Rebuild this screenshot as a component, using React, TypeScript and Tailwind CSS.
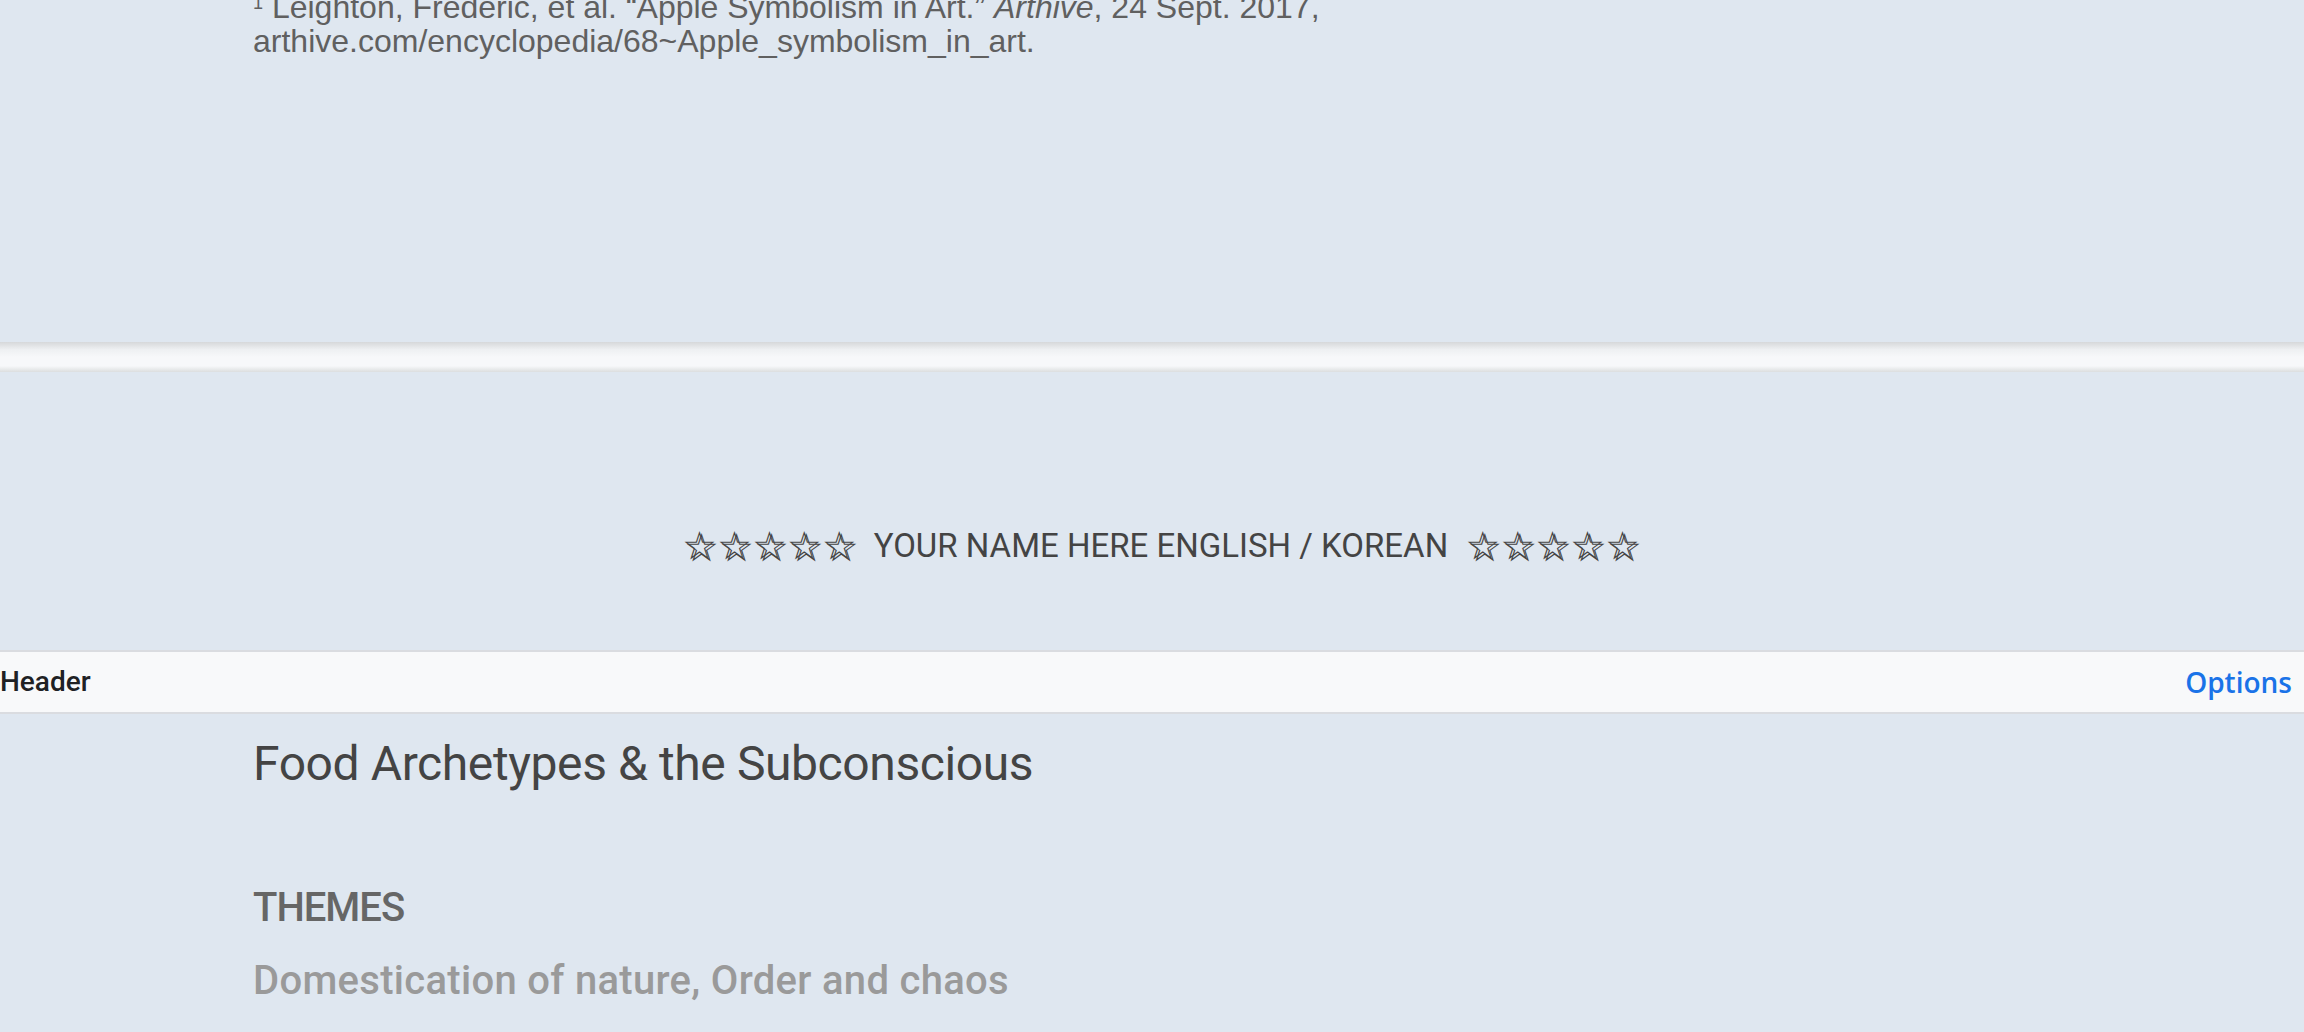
import type { ReactNode } from "react";

/** Outline stars flanking the name line; the offset shadow gives the thick lower-right edge. */
function Stars() {
  return (
    <span
      aria-hidden="true"
      className="font-['DejaVu_Sans',sans-serif] text-[39px] leading-[40px] text-[#444] [text-shadow:2px_2px_0_#444]"
    >
      ☆☆☆☆☆
    </span>
  );
}

function Section({ children, className }: { children: ReactNode; className?: string }) {
  return <section className={`px-[253px] ${className ?? ""}`}>{children}</section>;
}

export default function App() {
  return (
    <div className="min-h-[1032px] overflow-hidden bg-[#dfe7f0]">
      {/* Footnote from the previous page, scrolled partly out of view. */}
      <Section className="-mt-[10px]">
        <p className="font-['Liberation_Sans',Arial,sans-serif] text-[32px] leading-[34px] text-[#606060]">
          <sup className="text-[18px]">1</sup> Leighton, Frederic, et al. “Apple Symbolism in Art.”{" "}
          <i>Arthive</i>, 24 Sept. 2017,
          <br />
          arthive.com/encyclopedia/68~Apple_symbolism_in_art.
        </p>
      </Section>

      {/* Page break between slides. */}
      <div className="mt-[284px] h-[30px] bg-[linear-gradient(to_bottom,#d6d8da,#eef0f2_25%,#f7f8fa_50%,#f7f8fa_80%,#dcdedf)]" />

      <div className="flex items-center justify-center gap-[17px] pt-[154px] pb-[84px] pl-[18px] font-['Roboto',sans-serif] text-[33px] leading-[40px] text-[#444]">
        <Stars />
        <span>YOUR NAME HERE ENGLISH / KOREAN</span>
        <Stars />
      </div>

      <header className="flex h-[64px] items-center justify-between border-y-2 border-[#dadce0] bg-[#f8f9fa] pr-[12px]">
        <span className="font-['Roboto',sans-serif] text-[28px] font-medium text-[#202124]">Header</span>
        <button type="button" className="font-['Open_Sans',sans-serif] text-[28px] font-semibold text-[#1a73e8]">
          Options
        </button>
      </header>

      <Section className="pt-[22px] font-['Roboto',sans-serif]">
        <h1 className="text-[48px] leading-[56px] tracking-[-0.4px] text-[#444]">
          Food Archetypes &amp; the Subconscious
        </h1>
        <h2 className="mt-[92px] text-[40px] leading-[48px] font-medium tracking-[-1px] text-[#666]">THEMES</h2>
        <p className="mt-[25px] text-[40px] leading-[48px] font-medium tracking-[0.3px] text-[#9a9a9a]">
          Domestication of nature, Order and chaos
        </p>
      </Section>
    </div>
  );
}
